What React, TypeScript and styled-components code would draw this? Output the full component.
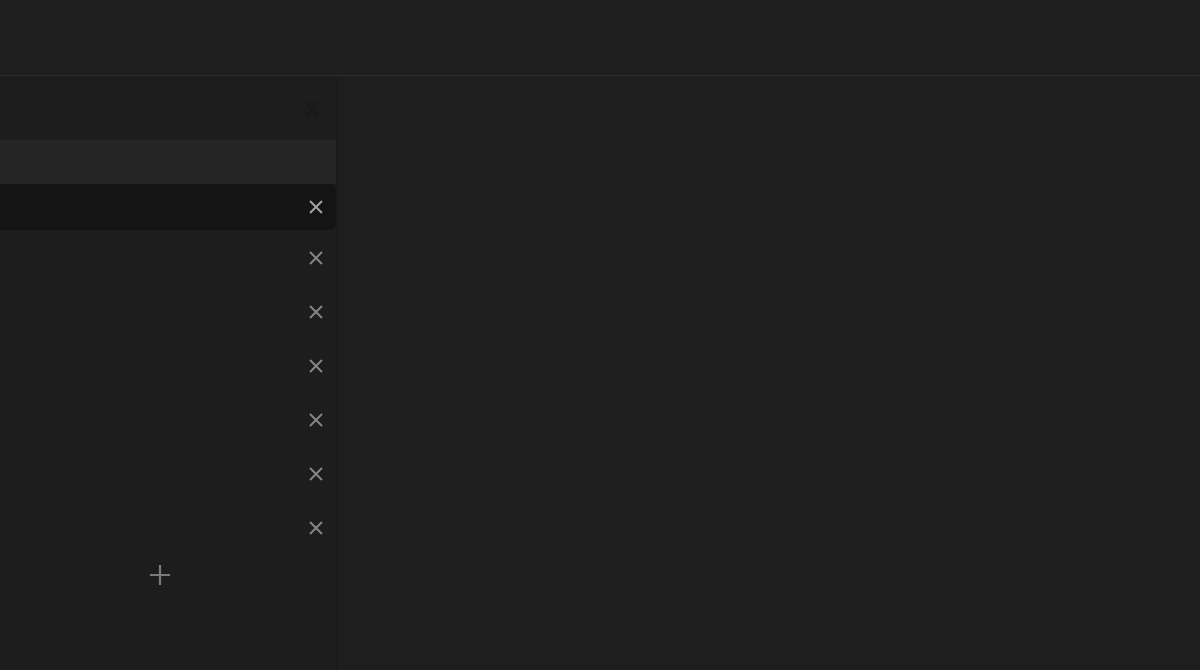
import React from "react";
import styled, { createGlobalStyle } from "styled-components";

const Global = createGlobalStyle`
  html, body { margin: 0; padding: 0; background: #1e1e1e; }
  body { font-family: "Liberation Sans", Arial, sans-serif; overflow: hidden; }
  #root { height: 670px; }
`;

const Page = styled.div`
  display: flex;
  flex-direction: column;
  width: 1200px;
  height: 670px;
  background: #1e1e1e;
`;

const TopBar = styled.header`
  height: 75px;
  flex: none;
  background: #1e1e1f;
  border-bottom: 1px solid #2c2c2c;
`;

const Body = styled.div`
  flex: 1;
  display: flex;
  min-height: 0;
`;

const Sidebar = styled.aside`
  width: 336px;
  flex: none;
  display: flex;
  flex-direction: column;
  background: #1d1d1d;
  border-right: 1px solid #191919;
  padding-top: 1px;
`;

const SideHeader = styled.div`
  height: 63px;
  display: flex;
  align-items: center;
  justify-content: flex-end;
  padding-right: 12px;
`;

const SearchRow = styled.div`
  height: 44px;
  background: #252525;
`;

const Row = styled.div<{ $active?: boolean }>`
  height: ${(p) => (p.$active ? "46px" : "54px")};
  margin-bottom: ${(p) => (p.$active ? "1px" : "0")};
  display: flex;
  align-items: center;
  justify-content: flex-end;
  padding-right: 8px;
  background: ${(p) => (p.$active ? "#141414" : "transparent")};
  border-radius: ${(p) => (p.$active ? "0 6px 6px 0" : "0")};
`;

const IconButton = styled.button<{ $color: string }>`
  width: 24px;
  height: 24px;
  padding: 0;
  border: none;
  background: transparent;
  display: flex;
  align-items: center;
  justify-content: center;
  color: ${(p) => p.$color};
`;

const AddRow = styled.div`
  height: 40px;
  display: flex;
  align-items: center;
  justify-content: flex-start;
  padding-left: 148px;
`;

const Main = styled.main`
  flex: 1;
  background: #1e1e1e;
`;

const XIcon = ({ size = 16 }: { size?: number }) => (
  <svg width={size} height={size} viewBox="0 0 16 16" fill="none">
    <path d="M2 2L14 14M14 2L2 14" stroke="currentColor" strokeWidth="2" strokeLinecap="butt" />
  </svg>
);

const PlusIcon = () => (
  <svg width="22" height="22" viewBox="0 0 22 22" fill="none">
    <path d="M11 1V21M1 11H21" stroke="currentColor" strokeWidth="2.2" />
  </svg>
);

export default function App() {
  const rows = [0, 1, 2, 3, 4, 5];
  return (
    <>
      <Global />
      <Page>
        <TopBar />
        <Body>
          <Sidebar>
            <SideHeader>
              <IconButton $color="#191919" aria-label="close">
                <XIcon size={18} />
              </IconButton>
            </SideHeader>
            <SearchRow />
            <Row $active>
              <IconButton $color="#a3a3a3" aria-label="remove">
                <XIcon />
              </IconButton>
            </Row>
            {rows.map((r) => (
              <Row key={r}>
                <IconButton $color="#858585" aria-label="remove">
                  <XIcon />
                </IconButton>
              </Row>
            ))}
            <AddRow>
              <IconButton $color="#7a7a7a" aria-label="add">
                <PlusIcon />
              </IconButton>
            </AddRow>
          </Sidebar>
          <Main />
        </Body>
      </Page>
    </>
  );
}
